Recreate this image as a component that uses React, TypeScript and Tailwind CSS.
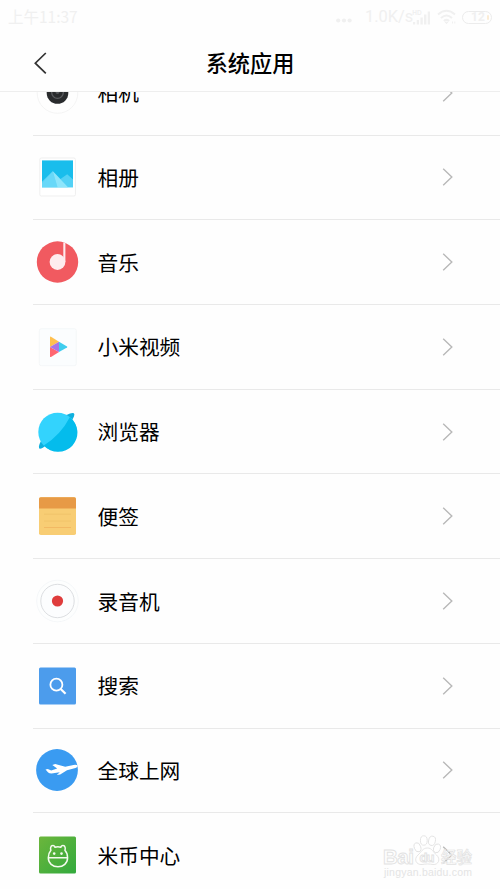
import type { ReactNode } from "react";

type AppItem = {
  name: string;
  icon: ReactNode;
};

const APPS: AppItem[] = [
  {
    name: "相机",
    icon: (
      <>
        <circle cx="24" cy="24" r="20.3" fill="#fefefe" stroke="#f1f1f1" strokeWidth="0.8" />
        <circle cx="24" cy="24" r="10.8" fill="#292b2d" />
        <circle cx="24" cy="23.5" r="5.8" fill="none" stroke="#5b5d60" strokeWidth="1.3" />
        <circle cx="24" cy="23" r="2" fill="#55585b" />
      </>
    ),
  },
  {
    name: "相册",
    icon: (
      <>
        <rect x="6.3" y="5" width="35.6" height="38" rx="1.5" fill="#fff" stroke="#efefef" strokeWidth="1" />
        <rect x="8.5" y="7.4" width="31" height="26.8" fill="#19bdec" />
        <path d="M8.5 28.4L19.3 18.2L27 26L33.7 21.3L39.5 26.5V34.2H8.5Z" fill="#53d1f5" />
        <path d="M8.5 30L19.3 18.2L24 34.2H8.5Z" fill="#68d8f8" />
        <path d="M19.3 18.2L34.5 34.2H24Z" fill="#8ee5fb" />
      </>
    ),
  },
  {
    name: "音乐",
    icon: (
      <>
        <circle cx="24" cy="24" r="20.7" fill="#f15a60" />
        <circle cx="24" cy="24" r="7.9" fill="#feecee" />
        <path d="M29.8 4.5V24H31.9V4.9Z" fill="#feecee" />
      </>
    ),
  },
  {
    name: "小米视频",
    icon: (
      <>
        <rect x="5.8" y="5.7" width="37" height="37" rx="2" fill="#fbfdfe" stroke="#f3f5f6" strokeWidth="0.8" />
        <path d="M16.5 24V14.3Q16.5 13.2 17.5 13.8L25.5 18.8Z" fill="#ffc04f" />
        <path d="M16.5 24V33.4Q16.5 34.5 17.5 33.9L25.5 29.1Z" fill="#ff6670" />
        <path d="M16.5 24L25.5 18.8V29.1Z" fill="#a873e5" />
        <path d="M25.5 18.8L33.5 23.5Q34.3 24 33.5 24.5L25.5 29.1Z" fill="#3fcdee" />
      </>
    ),
  },
  {
    name: "浏览器",
    icon: (
      <>
        <path d="M33 7Q38.5 4.2 40.4 5.3Q42.2 7 37 14.5L14 36.5Q7.5 41.5 5.8 40.6Q4.5 38.5 7.5 33Z" fill="#10b0de" />
        <circle cx="24.1" cy="24" r="19.3" fill="#33d3fd" />
        <path d="M36.3 9.2A19.3 19.3 0 1 1 10.3 37.5Q27.5 26.5 36.3 9.2Z" fill="#04bcec" />
      </>
    ),
  },
  {
    name: "便签",
    icon: (
      <>
        <rect x="5.5" y="5.2" width="37" height="37.8" rx="1.8" fill="#f8cd74" />
        <path d="M5.5 16.4V7Q5.5 5.2 7.3 5.2H40.7Q42.5 5.2 42.5 7V16.4Z" fill="#e79a46" />
        <path d="M10.5 22.2H37.5M10.5 29H37.5" stroke="#efc268" strokeWidth="0.8" />
        <path d="M10.5 35.5H37.5" stroke="#f0b45e" strokeWidth="0.8" />
      </>
    ),
  },
  {
    name: "录音机",
    icon: (
      <>
        <circle cx="24" cy="24" r="20.8" fill="#fdfefe" stroke="#f3f5f7" strokeWidth="0.8" />
        <circle cx="24" cy="24" r="16.7" fill="#fcfdfe" stroke="#dcdee1" strokeWidth="1" />
        <circle cx="24" cy="24" r="5.6" fill="#df3c3c" />
      </>
    ),
  },
  {
    name: "搜索",
    icon: (
      <>
        <rect x="5.5" y="5.5" width="37" height="37" rx="1.5" fill="#4c9cec" />
        <circle cx="22.9" cy="22.7" r="6" fill="none" stroke="#fff" strokeWidth="1.8" />
        <path d="M27.2 27L32.1 31.8" stroke="#fff" strokeWidth="2.2" />
      </>
    ),
  },
  {
    name: "全球上网",
    icon: (
      <>
        <circle cx="23.5" cy="24" r="20.9" fill="#3a9bf1" />
        <path
          d="M12 23.4L14.3 23L17.7 24.4L23.7 22.6L18.8 19L21.7 18.1L31.7 20.8L40 18.9Q43.5 18.5 44.2 19.6Q44.6 21.2 42 22L33.5 24.3L26.7 28.6L23.3 28.9L26.3 26.2L18 27.6Q15.7 27.6 14.7 26.5Z"
          fill="#fff"
        />
      </>
    ),
  },
  {
    name: "米币中心",
    icon: (
      <>
        <defs>
          <linearGradient id="coin" x1="0" y1="0" x2="1" y2="1">
            <stop offset="0" stopColor="#6cb63c" />
            <stop offset="1" stopColor="#32aa3d" />
          </linearGradient>
        </defs>
        <rect x="5.5" y="5.5" width="37" height="37" rx="1.5" fill="url(#coin)" />
        <path
          d="M14.8 26.8H34.1C34.1 23.5 33.3 21.2 31.4 19.2C32.2 17.3 31.6 15 30 14.6C28.6 14.2 27.6 15 27.3 16.2Q24.3 15.3 21.5 16.2C21.2 15 20.2 14.2 18.8 14.6C17.2 15 16.6 17.3 17.4 19.2C15.6 21.2 14.8 23.5 14.8 26.8C14.8 32.2 19.1 35.8 24.5 35.8C29.8 35.8 34.1 32.2 34.1 26.8"
          fill="none"
          stroke="#f4fbef"
          strokeWidth="1.5"
          strokeLinejoin="round"
        />
        <circle cx="20.7" cy="22.6" r="1.3" fill="#f4fbef" />
        <circle cx="28" cy="22.6" r="1.3" fill="#f4fbef" />
      </>
    ),
  },
];

function StatusBar() {
  return (
    <div className="flex h-[34px] items-center justify-between pl-2 pr-2 text-[#f0f0f0]">
      <span className="text-[15.5px] leading-none">上午11:37</span>
      <div className="flex items-center">
        <svg className="mr-[13px] mt-[7px]" width="16" height="5" viewBox="0 0 16 5" fill="currentColor">
          <circle cx="2.2" cy="2.5" r="2.1" />
          <circle cx="8" cy="2.5" r="2.1" />
          <circle cx="13.6" cy="2.5" r="2.1" />
        </svg>
        <span className="w-[45px] whitespace-nowrap font-['Roboto'] text-[16.4px] leading-none">1.0K/s</span>
        <svg className="ml-0.5" width="20" height="17" viewBox="0 0 20 17" fill="currentColor">
          <path d="M1 15.5V13H3.2V15.5ZM4.7 15.5V11H7V15.5ZM8.4 15.5V8.5H10.8V15.5ZM12 15.5V5.5H14.4V15.5ZM15.7 15.5V2.5H18V15.5Z" />
          <text x="0.3" y="6" fontSize="6.5" fontWeight="700" fontFamily="Liberation Sans, sans-serif">
            HD
          </text>
        </svg>
        <svg className="ml-[5px]" width="20" height="16" viewBox="0 0 20 16" fill="none" stroke="currentColor" strokeWidth="2">
          <path d="M1 5.5Q9.5 -2 18 5.5M4 9Q9.5 4 15 9M6.8 12Q9.5 9.8 12.2 12" />
          <path d="M8.2 13.2H10.8L9.5 14.7Z" fill="currentColor" strokeWidth="1" />
          <path d="M15.5 12.5V14.5M17.8 12.5V14.5" strokeWidth="1" />
        </svg>
        <div className="ml-[5px] flex h-[13px] w-[30px] items-center justify-between rounded-full border border-[#ececec] pl-2 pr-0.5 font-['Roboto'] text-[12px] font-bold leading-none">
          12
          <span className="h-[5px] w-[2px] rounded-full bg-[#fbecd5]" />
        </div>
      </div>
    </div>
  );
}

function Header() {
  return (
    <div className="flex h-[57px] items-center">
      <svg className="ml-[33px]" width="16" height="24" viewBox="0 0 16 24" fill="none" stroke="#333" strokeWidth="1.7">
        <path d="M12.8 2L2.3 12.2L12.8 22.4" />
      </svg>
      <h1 className="mr-[49px] flex-1 text-center text-[22.2px] font-medium leading-none text-black">系统应用</h1>
    </div>
  );
}

function AppRow({ app }: { app: AppItem }) {
  return (
    <li className="ml-[33px] flex h-[84.72px] items-center border-b border-[#e9e9e9]">
      <svg className="shrink-0" width="48" height="48" viewBox="-0.5 0 48 48">
        {app.icon}
      </svg>
      <span className="ml-[16.5px] flex-1 text-[20.7px] leading-none text-black">{app.name}</span>
      <svg className="mr-[45px]" width="14" height="20" viewBox="0 0 14 20" fill="none" stroke="#b8b8b8" strokeWidth="1.4">
        <path d="M2.2 1.8L10.8 10L2.2 18.2" />
      </svg>
    </li>
  );
}

function Watermark() {
  return (
    <svg className="absolute bottom-0 right-0" width="130" height="60" viewBox="370 829 130 60">
      <g fill="#fff" fillOpacity="0.6" stroke="#e2e2e2" strokeWidth="0.9">
        <text x="383" y="863.5" fontSize="20.5" fontWeight="700" fontFamily="Liberation Sans, sans-serif" textLength="31">
          Bai
        </text>
        <ellipse cx="417.5" cy="847.3" rx="3.2" ry="4.7" transform="rotate(-20 417.5 847.3)" />
        <ellipse cx="423.8" cy="840.5" rx="3.4" ry="4.7" />
        <ellipse cx="432" cy="840.8" rx="3.4" ry="4.7" transform="rotate(12 432 840.8)" />
        <ellipse cx="437" cy="848.3" rx="3.3" ry="4.5" transform="rotate(20 437 848.3)" />
        <path d="M427.5 848C432 848 433 852 436.5 855C441 859 438.5 865 433 864.5C429 863.8 426 863.8 422 864.5C416 865 413.5 859 418 855C421.5 852 422.5 848 427.5 848Z" />
        <text x="419.5" y="862" fontSize="13" fontWeight="700" fontFamily="Liberation Sans, sans-serif" textLength="15">
          du
        </text>
        <text x="441" y="862.5" fontSize="15.5" fontWeight="500" strokeWidth="0.7" fontFamily="Noto Sans CJK SC, sans-serif">
          经验
        </text>
      </g>
      <text x="384" y="875.5" fontSize="10.5" fontFamily="Liberation Sans, sans-serif" textLength="88" fill="#e4e4e4">
        jingyan.baidu.com
      </text>
    </svg>
  );
}

export default function App() {
  return (
    <div className="relative flex h-[889px] w-[500px] flex-col overflow-hidden bg-[#fefefe] font-['Noto_Sans_CJK_SC',sans-serif]">
      <header className="shrink-0 border-b border-[#eeeeee]">
        <StatusBar />
        <Header />
      </header>
      <main className="min-h-0 flex-1 overflow-hidden">
        <ul className="-mt-[41.2px]">
          {APPS.map((app) => (
            <AppRow key={app.name} app={app} />
          ))}
        </ul>
      </main>
      <Watermark />
    </div>
  );
}
